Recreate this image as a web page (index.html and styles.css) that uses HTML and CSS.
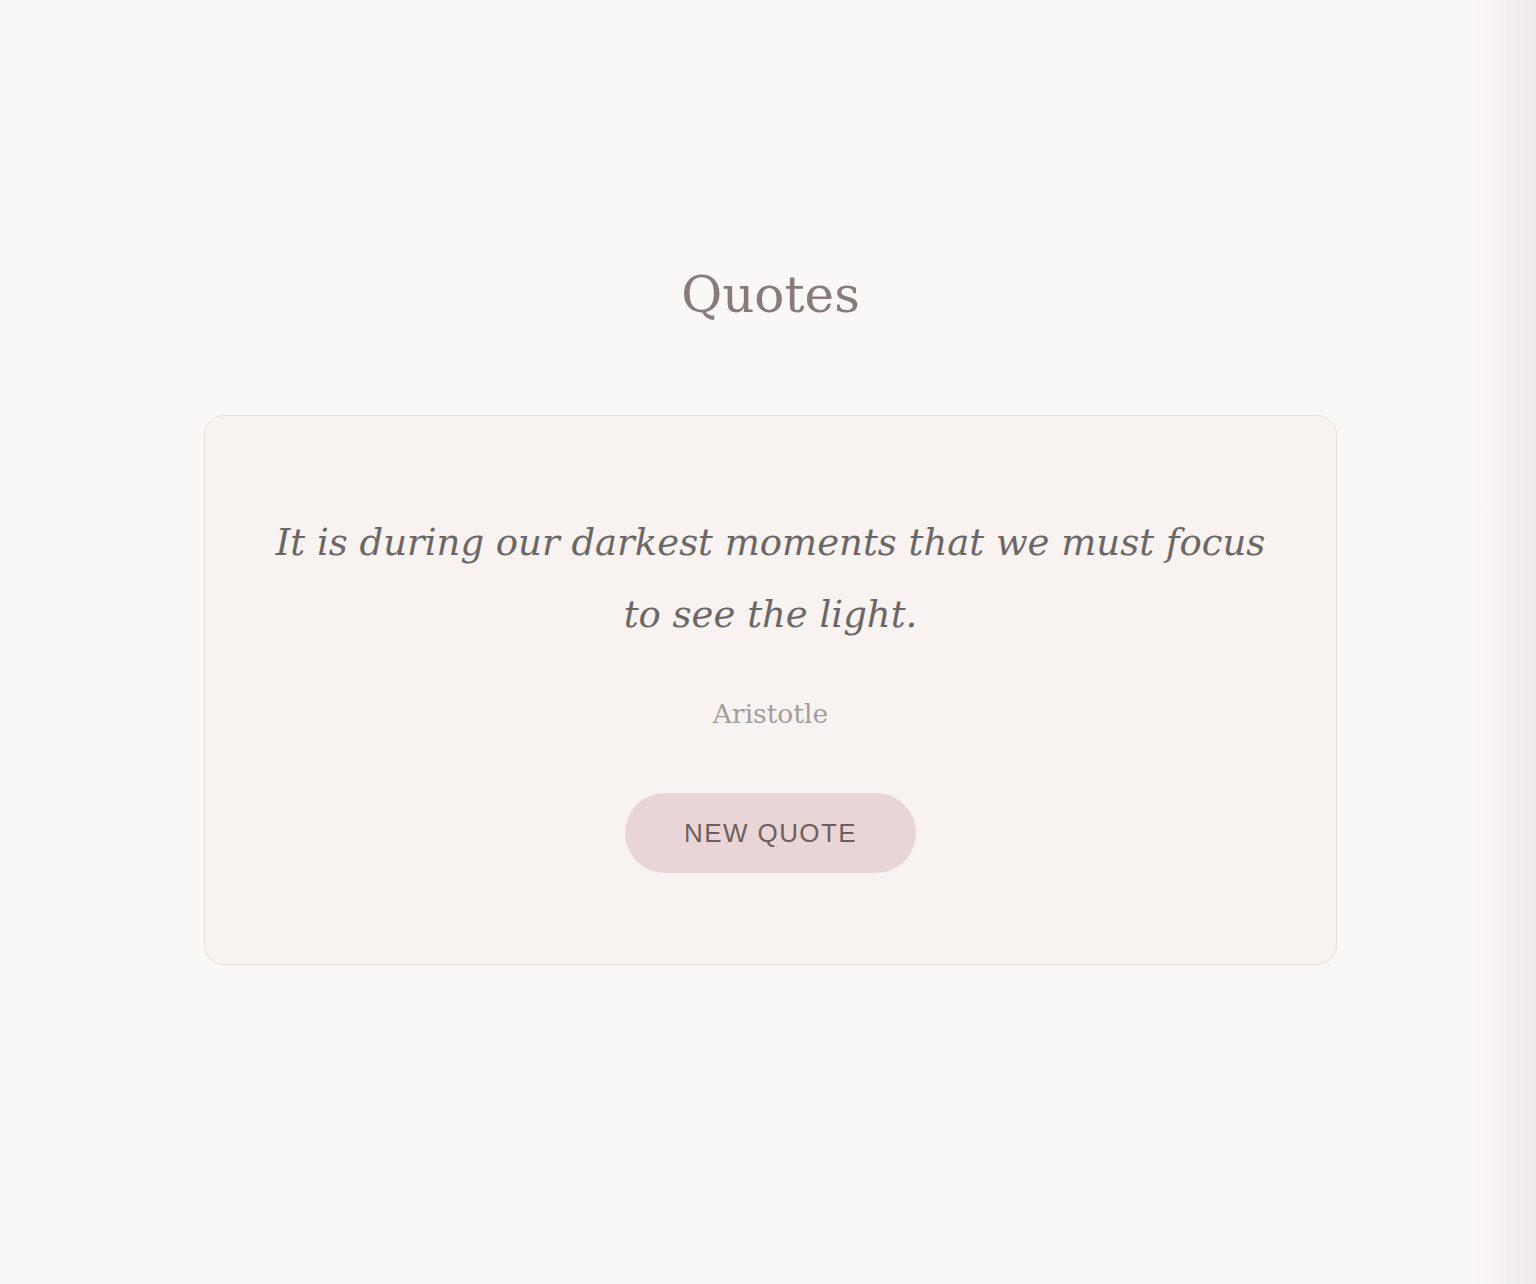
FILE: index.html
```html
<!DOCTYPE html>
<html lang="en">
<head>
    <meta charset="UTF-8">
    <meta name="viewport" content="width=device-width, initial-scale=1.0">
    <title>Quotes</title>
    <link rel="stylesheet" href="styles.css">
</head>
<body>
    <main class="page">
        <h1 class="title">Quotes</h1>
        <section class="card">
            <p class="quote">It is during our darkest moments that we must focus to see the light.</p>
            <p class="author">Aristotle</p>
            <button type="button" class="btn">NEW QUOTE</button>
        </section>
    </main>
    <div class="edge"></div>
</body>
</html>
```

FILE: styles.css
```css
*{
    margin: 0;
    padding: 0;
    box-sizing: border-box;
}

body{
    background-color: #faf8f6;
    font-family: "DejaVu Serif", Georgia, serif;
    min-height: 1284px;
}

.page{
    display: flex;
    flex-direction: column;
    align-items: center;
    padding-top: 262px;
    padding-left: 5px;
}

.title{
    font-size: 50px;
    font-weight: normal;
    line-height: 67px;
    color: #8a7b7b;
    margin-bottom: 86px;
}

.card{
    width: 1133px;
    display: flex;
    flex-direction: column;
    align-items: center;
    background-color: #f8f2f0;
    border: 1px solid #ecdcd6;
    border-radius: 20px;
    padding: 91px 60px 91px;
}

.quote{
    font-size: 37px;
    font-style: italic;
    line-height: 72px;
    color: #6b6767;
    text-align: center;
}

.author{
    font-size: 26.5px;
    line-height: 42px;
    color: #a39e9e;
    margin-top: 42px;
}

.btn{
    margin-top: 58px;
    width: 291px;
    height: 80px;
    border: none;
    border-radius: 40px;
    background-color: #ead5d6;
    color: #6e5f5f;
    font-family: "Liberation Sans", Arial, sans-serif;
    font-size: 26px;
    letter-spacing: 1.4px;
    cursor: pointer;
}

.edge{
    position: fixed;
    top: 0;
    right: 0;
    width: 60px;
    height: 100%;
    background: linear-gradient(to right, rgba(235, 233, 231, 0), rgba(235, 233, 231, 0.9));
    pointer-events: none;
}
```
